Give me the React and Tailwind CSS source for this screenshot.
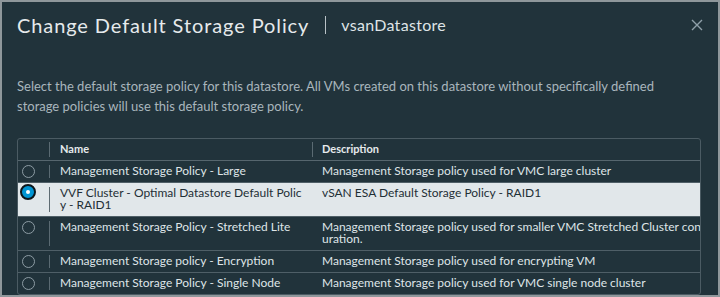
import React from 'react';

const policies = [
  {
    name: ['Management Storage Policy - Large'],
    desc: ['Management Storage policy used for VMC large cluster'],
  },
  {
    name: ['VVF Cluster - Optimal Datastore Default Polic', 'y - RAID1'],
    desc: ['vSAN ESA Default Storage Policy - RAID1'],
    selected: true,
  },
  {
    name: ['Management Storage Policy - Stretched Lite'],
    desc: ['Management Storage policy used for smaller VMC Stretched Cluster config', 'uration.'],
  },
  {
    name: ['Management Storage policy - Encryption'],
    desc: ['Management Storage policy used for encrypting VM'],
  },
  {
    name: ['Management Storage Policy - Single Node'],
    desc: ['Management Storage policy used for VMC single node cluster'],
  },
];

function Radio({ checked }) {
  if (checked) {
    return (
      <span className="flex h-[16px] w-[16px] items-center justify-center rounded-full border-2 border-[#0c161b] bg-[#0095d3]">
        <span className="h-[4px] w-[4px] rounded-full bg-white" />
      </span>
    );
  }
  return <span className="mt-[1px] ml-[1px] block h-[13px] w-[13px] rounded-full border border-[#8d9ca4]" />;
}

function Lines({ lines }) {
  return lines.map((l, i) => (
    <div key={i} className="whitespace-nowrap">{l}</div>
  ));
}

export default function App() {
  return (
    <div className="flex h-[297px] w-[720px] flex-col overflow-hidden border-2 border-[#8f979b] bg-[#21333b] font-['Lato',sans-serif]">
      {/* header */}
      <header className="flex h-[24px] shrink-0 items-center pl-[15px] pr-[15px] mt-[11px]">
        <h1 className="text-[20px] leading-[24px] tracking-[0.9px] text-[#e6eaec]">Change Default Storage Policy</h1>
        <span className="ml-[16px] mr-[15px] h-[18px] w-px bg-[#b9c2c7]" />
        <span className="text-[16px] leading-[24px] tracking-[0.3px] text-[#dfe4e7]">vsanDatastore</span>
        <button className="ml-auto flex h-[12px] w-[12px] items-center justify-center text-[#8fa0a9]">
          <svg width="12" height="12" viewBox="0 0 12 12" fill="none" stroke="currentColor" strokeWidth="1.4">
            <path d="M1 1L11 11M11 1L1 11" />
          </svg>
        </button>
      </header>

      <p className="mt-[39px] pl-[15px] text-[13px] leading-[20px] text-[#a9b6bd]">
        Select the default storage policy for this datastore. All VMs created on this datastore without specifically defined
        <br />
        storage policies will use this default storage policy.
      </p>

      {/* grid */}
      <div className="ml-[15px] mt-[22px] w-[684px] overflow-hidden rounded-[3px] border border-[#4b5b63] text-[12px] leading-[12px]">
        <div className="flex h-[22px] border-b border-[#56666e] text-[11px] font-bold text-[#e6eaec]">
          <div className="w-[31px]" />
          <div className="my-[3px] w-px bg-[#5a6a72]" />
          <div className="w-[262px] pl-[10px] pt-[4px]">Name</div>
          <div className="my-[3px] w-px bg-[#5a6a72]" />
          <div className="pl-[9px] pt-[4px]">Description</div>
        </div>
        {policies.map((p, i) => (
          <div
            key={i}
            className={
              'flex border-b border-[#4f5f67] ' +
              (p.selected ? 'bg-[#e1e7ea] text-[#1f2f36]' : 'text-[#dfe5e8]')
            }
          >
            <div className={p.selected ? 'w-[31px] pl-[2px] pt-[1px]' : 'w-[31px] pl-[3px] pt-[3px]'}>
              <Radio checked={p.selected} />
            </div>
            <div className={p.selected ? 'my-[4px] w-px bg-[#5d6b72]' : 'my-[4px] w-px bg-[#5a6a72]'} />
            <div className="w-[263px] pl-[10px] pt-[4px] pb-[5px]">
              <Lines lines={p.name} />
            </div>
            <div className="min-w-0 flex-1 pl-[9px] pt-[4px] pb-[5px]">
              <Lines lines={p.desc} />
            </div>
          </div>
        ))}
      </div>
    </div>
  );
}
